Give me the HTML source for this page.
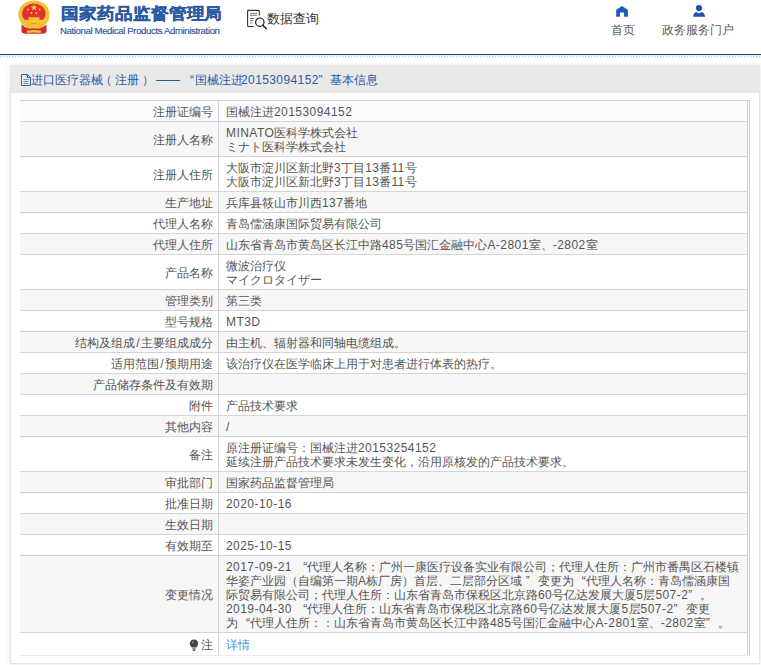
<!DOCTYPE html>
<html><head><meta charset="utf-8">
<style>
*{box-sizing:border-box}
html,body{margin:0;padding:0}
body{width:761px;height:665px;overflow:hidden;position:relative;background:#fff;font-family:"Liberation Sans",sans-serif;color:#555}
.abs{position:absolute}
#title{left:61px;top:2px;font-size:15.8px;font-weight:900;letter-spacing:.3px;color:#2b59a3;-webkit-text-stroke:.35px #2b59a3;white-space:nowrap;line-height:24px;transform:scaleX(1.1);transform-origin:0 0}
#sub{left:60px;top:24.5px;font-size:9.6px;letter-spacing:-.37px;color:#2a5599;-webkit-text-stroke:.15px #2a5599;white-space:nowrap;line-height:12px}
#sjcx{left:267px;top:9.5px;font-size:13.3px;color:#333;line-height:18px}
.nav{font-size:12px;color:#555;line-height:14px;white-space:nowrap}
#bline{left:0;top:54px;width:761px;height:1px;background:#1d4479}
#cline{left:0;top:55px;width:761px;height:1px;background:#e3f1fa}
#dots{left:0;top:56px;width:761px;height:1px;background:repeating-linear-gradient(90deg,#b4c6ea 0 1px,#f3f6fc 1px 2px,#fff 2px 3px)}
#dots2{left:0;top:57px;width:761px;height:1px;background:repeating-linear-gradient(90deg,#fff 0 1px,#e8edf7 1px 2px,#fff 2px 3px)}
#panel{left:10px;top:65px;width:750px;height:599px;background:#fff;box-shadow:inset 0 0 0 1px #e4e4e4,0 0 5px rgba(0,0,0,.10)}
#head{left:0;top:0;width:750px;height:28px;background:#e9e9e9;color:#2c5ba5;font-size:12px;line-height:14px}
#tbl{left:10px;top:35px;width:730px;border-right:1px solid #d3d3d3;padding-right:1px}
#tbl .r:first-child{border-top-color:#d3d3d3}
#ttop{left:10px;top:35px;width:730px;height:1px;background:#d3d3d3}
.v{border-right:1px solid #d3d3d3}
.r{position:relative;border-top:1px solid #d5d5d5;display:flex;font-size:12px;line-height:14px}
.l{display:flex;align-items:center;justify-content:flex-end}
.ql{display:inline-block;width:12px;text-align:right}.qr{display:inline-block;width:12px;text-align:left}
.l{width:199px;border-right:1px solid #d5d5d5;text-align:right;padding:4px 5px 2px 0;color:#555}
.v{flex:1;padding:4px 0 2px 7px;color:#555;white-space:nowrap}
.n{letter-spacing:.45px}
.sl{margin:0 1.3px}
.g{background:#f7f7f7}
.hs{position:absolute;top:8px;white-space:nowrap}
.n2{letter-spacing:.4px}
.b{background:#f9fbfe}
</style></head><body>
<!-- emblem -->
<svg class="abs" style="left:0;top:0" width="60" height="40" viewBox="0 0 60 40">
  <ellipse cx="34" cy="14.8" rx="15.6" ry="14.4" fill="#f1c232"/>
  <ellipse cx="33.8" cy="13.6" rx="11.7" ry="10.1" fill="#e3312b"/>
  <rect x="25" y="19.8" width="18" height="3.6" fill="#f3c43a"/>
  <rect x="28.5" y="17.3" width="11" height="2.6" fill="#f3c73c"/>
  <path d="M34 4.2 l.9 2.4 2.5 0 -2 1.5 .8 2.4 -2.2 -1.5 -2.2 1.5 .8 -2.4 -2 -1.5 2.5 0z" fill="#f6cf45"/>
  <circle cx="28" cy="9.5" r=".9" fill="#f6cf45"/><circle cx="39.7" cy="9.5" r=".9" fill="#f6cf45"/>
  <circle cx="31.4" cy="13" r=".9" fill="#f6cf45"/><circle cx="36.5" cy="13" r=".9" fill="#f6cf45"/>
  <path d="M21.5 24.5 Q25 28 29 28.5 L39 28.5 Q43 28 46.5 24.5 L46.5 31 Q46 33.8 43 33.8 L25 33.8 Q22 33.8 21.5 31 Z" fill="#d5282b"/>
  <path d="M29 26 Q34 23.5 39 26 L38.5 28 Q34 26.5 29.5 28 Z" fill="#f1c232"/>
  <path d="M26.5 30.8 Q34 29 41.5 30.8 L40.5 33 Q34 31.8 27.5 33 Z" fill="#efbd3c"/>
</svg>
<div id="title" class="abs">国家药品监督管理局</div>
<div id="sub" class="abs">National Medical Products Administration</div>
<!-- 数据查询 icon -->
<svg class="abs" style="left:244px;top:6px" width="26" height="26" viewBox="0 0 26 26">
  <path d="M15.3 9.6 V5.2 Q15.3 4.4 14.5 4.4 H4.4 Q3.6 4.4 3.6 5.2 V19.7 Q3.6 20.5 4.4 20.5 H9.8" fill="none" stroke="#333" stroke-width="1.1"/>
  <path d="M6 7.4h7M6 9.3h7M6 12.5h4M6 14.5h3M6 17h2.5" stroke="#777" stroke-width="1"/>
  <circle cx="15.8" cy="16.2" r="4.2" fill="none" stroke="#222" stroke-width="1.2"/>
  <path d="M18.8 19.2 L22.3 22.7" stroke="#222" stroke-width="1.6" stroke-linecap="round"/>
</svg>
<div id="sjcx" class="abs">数据查询</div>
<!-- home -->
<svg class="abs" style="left:616px;top:5px" width="13" height="13" viewBox="0 0 13 13">
  <path d="M6 .9 L11.9 4.9 V11.7 H8.1 V7.6 H3.9 V11.7 H.2 V4.9 Z" fill="#1b56bd"/>
</svg>
<div class="abs nav" style="left:611px;top:23px">首页</div>
<!-- user -->
<svg class="abs" style="left:692px;top:3px" width="15" height="15" viewBox="0 0 15 15">
  <circle cx="7" cy="5.1" r="3.1" fill="#1b52b5"/>
  <path d="M1.1 13.8 Q1.6 9.6 4.4 8.9 L7 10.6 L9.6 8.9 Q12.6 9.6 13.1 13.8 Z" fill="#1b52b5"/>
</svg>
<div class="abs nav" style="left:662px;top:23px">政务服务门户</div>
<div id="bline" class="abs"></div><div id="cline" class="abs"></div>
<div id="dots" class="abs"></div><div id="dots2" class="abs"></div>

<div id="panel" class="abs">
  <div id="head" class="abs">
  <svg class="abs" style="left:11px;top:9px" width="11" height="12" viewBox="0 0 11 12"><path d="M.5 .5H6.5L9.5 3.5V11.5H.5Z" fill="none" stroke="#3562a8" stroke-width="1"/><path d="M6.5 .5V3.5H9.5" fill="none" stroke="#3562a8" stroke-width="1"/><path d="M2.5 5.5h5M2.5 7.5h5M2.5 9.5h5" stroke="#6f8fc4" stroke-width="1"/></svg>
  <span class="hs" style="left:21px">进口医疗器械</span>
  <span class="hs" style="left:90px">（</span>
  <span class="hs" style="left:105px">注册</span>
  <span class="hs" style="left:132px">）</span>
  <span class="hs" style="left:146px">——</span>
  <span class="hs" style="left:180px">“</span>
  <span class="hs" style="left:185px">国械注进</span><span class="hs n2" style="left:231px">20153094152</span>
  <span class="hs" style="left:308.5px">”</span>
  <span class="hs" style="left:320px">基本信息</span>
  </div>
  <div id="ttop" class="abs"></div>
  <div id="tbl" class="abs">
    <div class="r b"><div class="l">注册证编号</div><div class="v">国械注进<span class="n">20153094152</span></div></div>
<div class="r g"><div class="l">注册人名称</div><div class="v"><span class="n">MINATO</span>医科学株式会社<br>ミナト医科学株式会社</div></div>
<div class="r "><div class="l">注册人住所</div><div class="v">大阪市淀川区新北野<span class="n">3</span>丁目<span class="n">13</span>番<span class="n">11</span>号<br>大阪市淀川区新北野<span class="n">3</span>丁目<span class="n">13</span>番<span class="n">11</span>号</div></div>
<div class="r g"><div class="l">生产地址</div><div class="v">兵库县筱山市川西<span class="n">137</span>番地</div></div>
<div class="r "><div class="l">代理人名称</div><div class="v">青岛儒涵康国际贸易有限公司</div></div>
<div class="r g"><div class="l">代理人住所</div><div class="v">山东省青岛市黄岛区长江中路<span class="n">485</span>号国汇金融中心<span class="n">A-2801</span>室、<span class="n">-2802</span>室</div></div>
<div class="r "><div class="l">产品名称</div><div class="v">微波治疗仪<br>マイクロタイザー</div></div>
<div class="r g"><div class="l">管理类别</div><div class="v">第三类</div></div>
<div class="r "><div class="l">型号规格</div><div class="v"><span class="n">MT3D</span></div></div>
<div class="r g"><div class="l">结构及组成<span class="sl">/</span>主要组成成分</div><div class="v">由主机、辐射器和同轴电缆组成。</div></div>
<div class="r "><div class="l">适用范围<span class="sl">/</span>预期用途</div><div class="v">该治疗仪在医学临床上用于对患者进行体表的热疗。</div></div>
<div class="r g"><div class="l">产品储存条件及有效期</div><div class="v">&nbsp;</div></div>
<div class="r "><div class="l">附件</div><div class="v">产品技术要求</div></div>
<div class="r g"><div class="l">其他内容</div><div class="v"><span class="n">/</span></div></div>
<div class="r "><div class="l">备注</div><div class="v">原注册证编号：国械注进<span class="n">20153254152</span><br>延续注册产品技术要求未发生变化，沿用原核发的产品技术要求。</div></div>
<div class="r g"><div class="l">审批部门</div><div class="v">国家药品监督管理局</div></div>
<div class="r "><div class="l">批准日期</div><div class="v"><span class="n">2020-10-16</span></div></div>
<div class="r g"><div class="l">生效日期</div><div class="v">&nbsp;</div></div>
<div class="r "><div class="l">有效期至</div><div class="v"><span class="n">2025-10-15</span></div></div>
<div class="r g"><div class="l">变更情况</div><div class="v"><span class="n">2017-09-21</span> <span class="ql">“</span>代理人名称：广州一康医疗设备实业有限公司；代理人住所：广州市番禺区石楼镇<br>华姿产业园（自编第一期<span class="n">A</span>栋厂房）首层、二层部分区域 <span class="qr">”</span>变更为<span class="ql">“</span>代理人名称：青岛儒涵康国<br>际贸易有限公司；代理人住所：山东省青岛市保税区北京路<span class="n">60</span>号亿达发展大厦<span class="n">5</span>层<span class="n">507-2</span><span class="qr">”</span>。<br><span class="n">2019-04-30</span> <span class="ql">“</span>代理人住所：山东省青岛市保税区北京路<span class="n">60</span>号亿达发展大厦<span class="n">5</span>层<span class="n">507-2</span><span class="qr">”</span>变更<br>为<span class="ql">“</span>代理人住所：：山东省青岛市黄岛区长江中路<span class="n">485</span>号国汇金融中心<span class="n">A-2801</span>室、<span class="n">-2802</span>室<span class="qr">”</span>。</div></div>
    <div class="r" style="border-bottom:1px solid #ebebef"><div class="l" style="padding-top:5px;padding-bottom:3px"><svg width="10" height="12" viewBox="0 0 10 12" style="margin-right:2px"><path d="M5 .5 C2.3 .5 .8 2.4 .8 4.5 C.8 6.3 2 7.2 2.8 8.6 L7.2 8.6 C8 7.2 9.2 6.3 9.2 4.5 C9.2 2.4 7.7 .5 5 .5Z" fill="#444"/><rect x="3.2" y="9.4" width="3.6" height="1.1" fill="#444"/><rect x="3.8" y="10.9" width="2.4" height="1" fill="#444"/><circle cx="3.8" cy="3.3" r="1" fill="#888"/></svg>注</div><div class="v" style="padding-top:5px;padding-bottom:3px;color:#4a8bd6">详情</div></div>
  </div>
</div>
</body></html>
